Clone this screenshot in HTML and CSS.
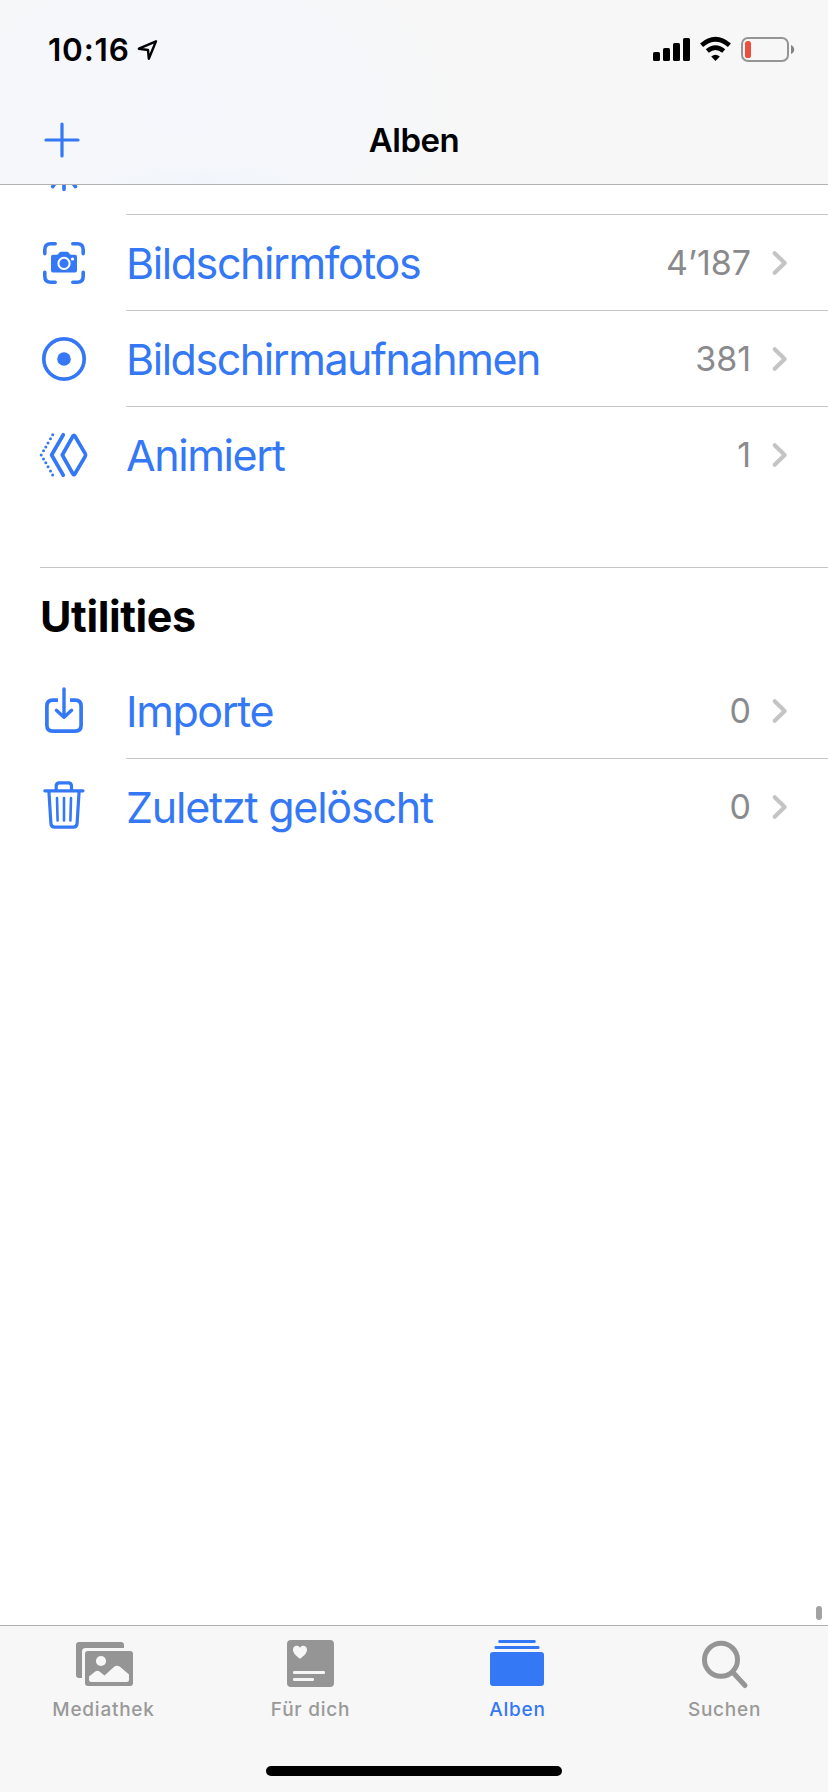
FILE: index.html
```html
<!DOCTYPE html>
<html lang="de">
<head>
<meta charset="utf-8">
<title>Alben</title>
<link rel="stylesheet" href="styles.css">
</head>
<body>
<div class="screen">
  <header class="header">
    <div class="status">
      <span class="time">10:16</span>
      <svg class="location" width="24" height="24" viewBox="136 38 24 24"><path d="M156 41.3 138.9 48.7 148 50 148.8 58.7Z" fill="none" stroke="#000" stroke-width="2.4" stroke-linejoin="round"/></svg>
      <svg class="signals" width="145" height="30" viewBox="651 34 145 30">
        <rect x="653" y="52" width="7" height="9" rx="1.6"/><rect x="663" y="48" width="7" height="13" rx="1.6"/><rect x="673" y="43" width="7" height="18" rx="1.6"/><rect x="683" y="38" width="7" height="23" rx="1.6"/>
        <path d="M701.6 45.2Q715.5 33.2 729.4 45.2M707.3 51Q715.5 44.2 723.7 51" fill="none" stroke="#000" stroke-width="4.7"/>
        <path d="M711.2 56.4Q715.5 53 719.8 56.4L715.5 61Z"/>
        <rect x="742" y="38" width="46" height="23" rx="6" fill="none" stroke="#959595" stroke-width="2"/>
        <rect x="745" y="41" width="6" height="17" rx="2.6" fill="#eb4e3d"/>
        <path d="M791 45Q794.2 46.5 794.2 49.5T791 54Z" fill="#848484"/>
      </svg>
    </div>
    <div class="nav">
      <svg class="plus" width="38" height="38" viewBox="0 0 38 38"><path d="M19 3V35M3 19H35" stroke="#3478f6" stroke-width="3.2" stroke-linecap="round"/></svg>
      <h1 class="title">Alben</h1>
    </div>
  </header>
  <main class="content">
    <div class="peek"><svg class="icon" width="126" height="29" viewBox="0 185 126 29"><path d="M64 180V189.3M55.8 182 52.8 186.6M72.2 182 75.4 186.6"/></svg><div class="peek-line"></div></div>
    <div class="row"><svg class="icon" width="126" height="95" viewBox="0 0 126 95"><path stroke-width="3.6" d="M44.8 38.6V34.8Q44.8 28.8 50.8 28.8H55.2M72.8 28.8H77.2Q83.2 28.8 83.2 34.8V38.6M83.2 57.2V61.2Q83.2 67.2 77.2 67.2H72.8M55.2 67.2H50.8Q44.8 67.2 44.8 61.2V57.2"/><path class="solid" d="M53 39.7H57C58.5 39.7 59 36.8 61 36.8H67C69 36.8 69.5 39.7 71 39.7H75Q77 39.7 77 41.8V55.5Q77 57.6 75 57.6H53Q51 57.6 51 55.5V41.8Q51 39.7 53 39.7Z"/><circle class="knock" cx="64" cy="48.4" r="5.6"/><circle class="dot-hole" cx="72.5" cy="44" r="1.6"/></svg>
      <div class="cell line"><span class="label l1">Bildschirmfotos</span><span class="count">4’187</span><svg class="chev" width="20" height="95" viewBox="765 0 20 95"><path d="M768.7 38.2 778.7 48 768.7 57.8"/></svg></div></div>
    <div class="row"><svg class="icon" width="126" height="95" viewBox="0 0 126 95"><circle cx="64" cy="48" r="20.2"/><circle class="solid" cx="64" cy="48" r="6.8"/></svg>
      <div class="cell line"><span class="label l2">Bildschirmaufnahmen</span><span class="count">381</span><svg class="chev" width="20" height="95" viewBox="765 0 20 95"><path d="M768.7 38.2 778.7 48 768.7 57.8"/></svg></div></div>
    <div class="row"><svg class="icon" width="126" height="95" viewBox="0 0 126 95"><path d="M62.3 48 73 29Q73.9 27.5 74.8 29L85.2 46.6Q86 48 85.2 49.4L74.8 67Q73.9 68.5 73 67ZM63.3 27.8 51.6 48 63.3 68.2"/><g class="solid"><circle cx="52.7" cy="27.7" r="1.5"/><circle cx="50.5" cy="31.8" r="1.5"/><circle cx="48" cy="36" r="1.5"/><circle cx="45.8" cy="40" r="1.5"/><circle cx="43.5" cy="43.8" r="1.5"/><circle cx="41.2" cy="48" r="1.5"/><circle cx="43.5" cy="52" r="1.5"/><circle cx="45.8" cy="55.8" r="1.5"/><circle cx="48" cy="59.8" r="1.5"/><circle cx="50.5" cy="63.9" r="1.5"/><circle cx="52.7" cy="68" r="1.5"/></g></svg>
      <div class="cell"><span class="label l3">Animiert</span><span class="count">1</span><svg class="chev" width="20" height="95" viewBox="765 0 20 95"><path d="M768.7 38.2 778.7 48 768.7 57.8"/></svg></div></div>
    <section class="group">
      <h2 class="heading"><span class="heading-text">Utilities</span></h2>
      <div class="row"><svg class="icon" width="126" height="95" viewBox="0 0 126 95"><path stroke-linecap="butt" d="M58 37.2H52.8Q46.9 37.2 46.9 43.2V62.3Q46.9 68.2 52.8 68.2H75.2Q81.1 68.2 81.1 62.3V43.2Q81.1 37.2 75.2 37.2H70"/><path stroke-width="3.4" d="M64 26V54M56.4 47.3 64 54.3 71.6 47.3"/></svg>
        <div class="cell line"><span class="label l4">Importe</span><span class="count">0</span><svg class="chev" width="20" height="95" viewBox="765 0 20 95"><path d="M768.7 38.2 778.7 48 768.7 57.8"/></svg></div></div>
      <div class="row"><svg class="icon" width="126" height="95" viewBox="0 0 126 95"><path stroke-width="3.2" d="M44.8 31.8H83M56.2 31V27Q56.2 23.9 59.4 23.9H68.3Q71.5 23.9 71.5 27V31M48.9 32.5 50.9 64.3Q51.1 68.1 54.9 68.1H73.1Q76.9 68.1 77.1 64.3L79.1 32.5"/><path stroke-width="2.6" d="M57 39 57.6 61.5M64 39V61.5M71 39 70.4 61.5"/></svg>
        <div class="cell"><span class="label l5">Zuletzt gelöscht</span><span class="count">0</span><svg class="chev" width="20" height="95" viewBox="765 0 20 95"><path d="M768.7 38.2 778.7 48 768.7 57.8"/></svg></div></div>
    </section>
    <div class="thumb"></div>
  </main>
  <footer class="footer">
    <nav class="tabs">
      <div class="tab"><svg width="207" height="66" viewBox="0 0 207 66"><path d="M79 16H121Q124 16 124 19V22H85.5Q82 22 82 25.5V52H79Q76 52 76 49V19Q76 16 79 16Z"/><rect x="85" y="25" width="48" height="35" rx="3"/><g class="cut"><circle cx="101" cy="35" r="5.1"/><path d="M89 50.5 95.2 45.6Q97.4 44 99.8 45.7L104.5 49.5 114.2 40.8Q117 38.5 120 40.8L129 48.5V53.5Q129 56 126.5 56H91.5Q89 56 89 53.5Z"/></g></svg><span class="tab-label">Mediathek</span></div>
      <div class="tab"><svg width="207" height="66" viewBox="207 0 207 66"><rect x="287" y="14" width="47" height="47" rx="4"/><g class="cut"><path d="M300 32.8C296 30 293 27 293 23.8 293 19.5 298 18.6 300 21.7 302 18.6 307 19.5 307 23.8 307 27 304 30 300 32.8Z"/><rect x="293" y="45" width="32" height="3" rx="1.2"/><rect x="293" y="52" width="21" height="3" rx="1.2"/></g></svg><span class="tab-label">Für dich</span></div>
      <div class="tab active"><svg width="207" height="66" viewBox="414 0 207 66"><rect x="490" y="26" width="54" height="34" rx="3"/><rect x="494.5" y="20" width="45" height="3" rx="1.3"/><rect x="498.3" y="14" width="37.4" height="3" rx="1.3"/></svg><span class="tab-label">Alben</span></div>
      <div class="tab"><svg width="207" height="66" viewBox="621 0 207 66"><g class="search"><circle cx="721" cy="33.8" r="16.5"/><path d="M733 46.5 745 59.5"/></g></svg><span class="tab-label">Suchen</span></div>
    </nav>
    <div class="home"></div>
  </footer>
</div>
</body>
</html>
```
FILE: styles.css
```css
* { box-sizing: border-box; margin: 0; padding: 0; }
body { font-family: Inter, "Liberation Sans", sans-serif; background: #fff; }
svg { display: block; flex: none; }
.screen { width: 828px; height: 1792px; display: flex; flex-direction: column; overflow: hidden; }
.header { height: 185px; border-bottom: 1px solid #b2b2b2; background: radial-gradient(ellipse 130px 26px at 205px 184px, #f1f6fc, rgba(241,246,252,0)), radial-gradient(ellipse 300px 200px at 180px 110px, #f5f7fc, #f5f7fb 40%, rgba(245,247,251,0)), #f7f7f7; }
.status { height: 96px; display: flex; align-items: flex-start; padding-left: 48px; padding-right: 32px; }
.time { width: 88px; font-size: 31.5px; font-weight: 600; line-height: 99px; letter-spacing: 0.8px; white-space: nowrap; }
.location { margin-top: 38px; }
.signals { margin: 34px 0 0 auto; }
.nav { display: grid; grid-template-columns: 1fr auto 1fr; height: 88px; align-items: center; }
.plus { margin-left: 42.5px; }
.title { font-size: 33px; font-weight: 600; line-height: 88px; letter-spacing: -0.5px; }
.content { flex: 1; display: flex; flex-direction: column; position: relative; }
.peek { height: 30px; display: flex; }
.peek-line { flex: 1; border-bottom: 1px solid #c6c6c8; }
.row { height: 96px; display: flex; }
.icon { fill: none; stroke: #3478f6; stroke-width: 3.7; stroke-linecap: round; stroke-linejoin: round; }
.solid { fill: #3478f6; stroke: none; }
.knock { stroke: #fff; stroke-width: 2; }
.dot-hole { fill: #fff; stroke: none; }
.cell { flex: 1; height: 96px; display: flex; padding-right: 37px; }
.line { border-bottom: 1px solid #c6c6c8; }
.label { flex: 1; font-size: 43px; line-height: 97px; color: #3478f6; white-space: nowrap; }
.l1 { letter-spacing: -1.42px; }
.l2 { letter-spacing: -1.45px; }
.l3 { letter-spacing: -1.4px; }
.l4 { letter-spacing: -1.4px; }
.l5 { letter-spacing: -1.22px; }
.count { font-size: 34px; line-height: 96px; color: #8a8a8d; margin-right: 20px; }
.chev { fill: none; stroke: #c4c4c6; stroke-width: 4.1; stroke-linecap: round; stroke-linejoin: round; }
.group { margin-top: 64px; }
.heading { height: 96px; margin-left: 40px; border-top: 1px solid #c6c6c8; }
.heading-text { font-size: 43px; font-weight: 700; line-height: 96px; letter-spacing: -0.4px; }
.thumb { width: 6px; height: 14px; margin: auto 6px 5px auto; border-radius: 3px; background: #a2a2a2; }
.footer { height: 167px; border-top: 1px solid #b2b2b2; background: #f7f7f7; }
.tabs { display: grid; grid-template-columns: repeat(4, 207px); height: 140px; fill: #959595; color: #999; }
.tab { display: flex; flex-direction: column; align-items: center; }
.active { fill: #3478f6; color: #3478f6; }
.cut { fill: #f7f7f7; }
.search { fill: none; stroke: #959595; stroke-width: 5; stroke-linecap: round; }
.tab-label { font-size: 19px; font-weight: 500; line-height: 36px; letter-spacing: 0.75px; }
.home { width: 296px; height: 10px; margin: 0 auto; border-radius: 5px; background: #000; }
```
